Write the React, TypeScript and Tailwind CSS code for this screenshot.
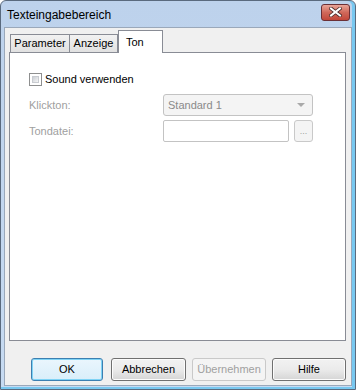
import React from "react";

const font = { fontFamily: '"Liberation Sans", Arial, sans-serif' };

function WinButton({ label, width, disabled, primary }: { label: string; width: string; disabled?: boolean; primary?: boolean }) {
  return (
    <div
      className={`${width} h-[23px] rounded-[3px] border flex items-center justify-center text-[11px] ${
        disabled
          ? "border-[#c9c9c9] bg-[#f4f4f4] text-[#a0a0a0]"
          : primary
          ? "border-[#3c7fb1] bg-gradient-to-b from-[#eaf6fd] to-[#d9eefa] text-black shadow-[inset_0_0_0_1px_#7fd3f5]"
          : "border-[#707070] bg-gradient-to-b from-[#f2f2f2] via-[#ebebeb] to-[#d5d5d5] text-black shadow-[inset_0_0_0_1px_#fcfcfc]"
      }`}
    >
      {label}
    </div>
  );
}

export default function App() {
  return (
    <div className="w-[356px] h-[390px] bg-white" style={font}>
      <div className="w-[356px] h-[390px] flex flex-col border border-[#5a6a7e] rounded-t-[6px] bg-gradient-to-b from-[#bdd2ec] to-[#c7dbf2] shadow-[inset_-3px_0_0_#78c8f0,inset_0_-2px_0_#78c8f0]">
        {/* title bar */}
        <div className="h-[26px] flex items-center justify-between pl-[6px] pr-[5px] shrink-0">
          <span className="text-[12px] text-black pt-[1px]">Texteingabebereich</span>
          <div className="w-[29px] h-[17px] mt-[-4px] rounded-[3px] border border-[#6b3036] bg-gradient-to-b from-[#e8a599] via-[#d0685a] to-[#c2473a] flex items-center justify-center">
            <svg width="13" height="10" viewBox="0 0 13 10">
              <path d="M2 1.5 L11 8.5 M11 1.5 L2 8.5" stroke="#4a2a2a" strokeWidth="3.6" strokeLinecap="square" />
              <path d="M2 1.5 L11 8.5 M11 1.5 L2 8.5" stroke="#ffffff" strokeWidth="2" strokeLinecap="square" />
            </svg>
          </div>
        </div>

        {/* client area */}
        <div className="flex-1 ml-[3px] mr-[3px] mb-[3px] bg-[#f0f0f0] border border-[#9aa8ba] flex flex-col pl-[4px] pt-[2px]">
          {/* tabs */}
          <div className="flex items-end h-[22px] pl-[1px] relative z-10">
            <div className="h-[18px] w-[60px] border border-[#898c95] border-b-0 bg-gradient-to-b from-[#f2f2f2] to-[#e1e1e1] text-[11px] flex items-center justify-center">Parameter</div>
            <div className="h-[18px] w-[48px] border border-[#898c95] border-b-0 border-l-0 bg-gradient-to-b from-[#f2f2f2] to-[#e1e1e1] text-[11px] flex items-center justify-center">Anzeige</div>
            <div className="h-[23px] -mb-px w-[45px] pl-[7px] border border-[#898c95] border-b-0 bg-white text-[11px] flex items-start pt-[3px]">Ton</div>
          </div>

          {/* pane */}
          <div className="w-[337px] h-[289px] bg-white border border-[#898c95] flex flex-col pl-[19px] pt-[19px] text-[11px]">
            <div className="flex items-center gap-[3px] h-[15px]">
              <div className="w-[13px] h-[13px] border border-[#8e8f8f] bg-white p-[2px]">
                <div className="w-full h-full bg-gradient-to-br from-[#cbcfd5] to-[#f6f6f6] border border-[#c8cbd0]" />
              </div>
              <span className="text-black">Sound verwenden</span>
            </div>

            <div className="flex items-center mt-[7px] h-[22px]">
              <span className="w-[134px] text-[#a0a0a0]">Klickton:</span>
              <div className="w-[150px] h-[22px] rounded-[3px] border border-[#c3c3c3] bg-[#f4f4f4] flex items-center justify-between pl-[4px] pr-[7px] text-[#8a8a8a]">
                <span>Standard 1</span>
                <svg width="8" height="4" viewBox="0 0 8 4">
                  <path d="M0 0 L8 0 L4 4 Z" fill="#a9a9a9" />
                </svg>
              </div>
            </div>

            <div className="flex items-center mt-[4px] h-[22px]">
              <span className="w-[134px] text-[#a0a0a0]">Tondatei:</span>
              <div className="w-[126px] h-[22px] rounded-[2px] border border-[#c3c3c3] bg-white" />
              <div className="ml-[5px] w-[19px] h-[22px] rounded-[3px] border border-[#c9c9c9] bg-[#f4f4f4] flex items-end justify-center pb-[5px] text-[9px] text-[#a0a0a0] leading-none">...</div>
            </div>
          </div>

          {/* buttons */}
          <div className="flex items-center mt-[17px] pl-[22px]">
            <WinButton label="OK" width="w-[72px]" primary />
            <div className="w-[8px]" />
            <WinButton label="Abbrechen" width="w-[75px]" />
            <div className="w-[6px]" />
            <WinButton label="Übernehmen" width="w-[74px]" disabled />
            <div className="w-[6px]" />
            <WinButton label="Hilfe" width="w-[74px]" />
          </div>
        </div>
      </div>
    </div>
  );
}
